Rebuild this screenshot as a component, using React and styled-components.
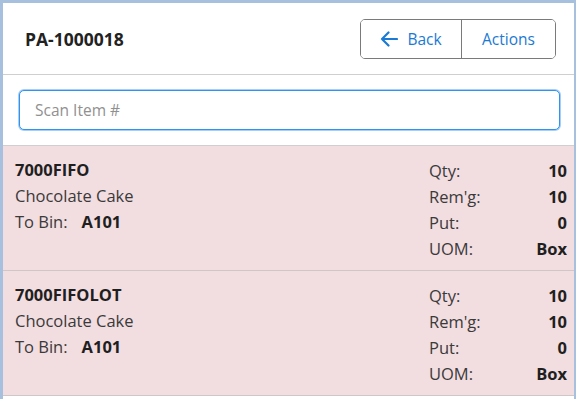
import React from "react";
import styled, { createGlobalStyle } from "styled-components";

const Global = createGlobalStyle`
  html, body { margin: 0; padding: 0; }
  body {
    background: #a7c0de;
    font-family: "Open Sans", "Noto Sans", sans-serif;
    overflow: hidden;
  }
`;

const Page = styled.div`
  padding: 3px 2px 0 3px;
  height: 399px;
  box-sizing: border-box;
`;

const Panel = styled.div`
  background: #fff;
  height: 100%;
  display: flex;
  flex-direction: column;
  overflow: hidden;
`;

const Header = styled.div`
  display: flex;
  align-items: center;
  justify-content: space-between;
  height: 72px;
  padding: 0 18px 0 22px;
  border-bottom: 1px solid #cfcfcf;
  box-sizing: border-box;
`;

const Title = styled.h1`
  margin: 0;
  font-size: 17.5px;
  font-weight: 700;
  color: #222;
`;

const ButtonGroup = styled.div`
  display: flex;
  height: 40px;
  border: 1px solid #7a7a7a;
  border-radius: 5px;
  box-sizing: border-box;
  overflow: hidden;
`;

const GroupButton = styled.button`
  display: flex;
  align-items: center;
  justify-content: center;
  gap: 9px;
  width: ${(p) => p.$w}px;
  background: #fff;
  border: none;
  border-left: ${(p) => (p.$divider ? "1px solid #7a7a7a" : "none")};
  color: #1a7ad4;
  font-family: inherit;
  font-size: 15.5px;
  padding: 0;
  cursor: pointer;
`;

const SearchRow = styled.div`
  padding: 15px 14px 15px 16px;
  border-bottom: 1px solid #cfcfcf;
`;

const SearchInput = styled.input`
  width: 100%;
  height: 40px;
  box-sizing: border-box;
  border: 1px solid #2f93ef;
  border-radius: 5px;
  box-shadow: 0 0 0 1px #a5cff6;
  padding: 0 15px;
  font-family: inherit;
  font-size: 15.5px;
  color: #333;
  outline: none;
  &::placeholder { color: #909090; }
`;

const Card = styled.div`
  display: flex;
  justify-content: space-between;
  background: #f2dde0;
  padding: 11px 7px 9px 12px;
  border-bottom: 1px solid #cfc6c8;
  flex-shrink: 0;
`;

const Col = styled.div`
  display: flex;
  flex-direction: column;
`;

const Line = styled.div`
  height: 26px;
  line-height: 26px;
  font-size: 16.5px;
  color: ${(p) => (p.$bold ? "#1f1f1f" : "#3a3a3a")};
  font-weight: ${(p) => (p.$bold ? 700 : 400)};
  white-space: nowrap;
`;

const Strong = styled.span`
  font-weight: 700;
  color: #1f1f1f;
  margin-left: 14px;
`;

const Stats = styled.div`
  display: grid;
  grid-template-columns: 80px 58px;
  grid-auto-rows: 26px;
  align-items: center;
  font-size: 16.5px;
`;

const StatLabel = styled.div`
  color: #3a3a3a;
`;

const StatValue = styled.div`
  text-align: right;
  font-weight: 700;
  color: #1f1f1f;
`;

const ArrowIcon = () => (
  <svg width="18" height="16" viewBox="0 0 18 16" fill="none">
    <path d="M17 8H2M8.5 1.5L2 8l6.5 6.5" stroke="#1a7ad4" strokeWidth="2.2" strokeLinecap="round" strokeLinejoin="round" />
  </svg>
);

const items = [
  { code: "7000FIFO", name: "Chocolate Cake", bin: "A101", qty: 10, rem: 10, put: 0, uom: "Box" },
  { code: "7000FIFOLOT", name: "Chocolate Cake", bin: "A101", qty: 10, rem: 10, put: 0, uom: "Box" },
];

export default function App() {
  return (
    <>
      <Global />
      <Page>
        <Panel>
          <Header>
            <Title>PA-1000018</Title>
            <ButtonGroup>
              <GroupButton $w={100}>
                <ArrowIcon />
                Back
              </GroupButton>
              <GroupButton $w={94} $divider>Actions</GroupButton>
            </ButtonGroup>
          </Header>
          <SearchRow>
            <SearchInput placeholder="Scan Item #" autoFocus />
          </SearchRow>
          {items.map((it) => (
            <Card key={it.code}>
              <Col>
                <Line $bold>{it.code}</Line>
                <Line>{it.name}</Line>
                <Line>
                  To Bin:<Strong>{it.bin}</Strong>
                </Line>
              </Col>
              <Stats>
                <StatLabel>Qty:</StatLabel>
                <StatValue>{it.qty}</StatValue>
                <StatLabel>Rem'g:</StatLabel>
                <StatValue>{it.rem}</StatValue>
                <StatLabel>Put:</StatLabel>
                <StatValue>{it.put}</StatValue>
                <StatLabel>UOM:</StatLabel>
                <StatValue>{it.uom}</StatValue>
              </Stats>
            </Card>
          ))}
        </Panel>
      </Page>
    </>
  );
}
